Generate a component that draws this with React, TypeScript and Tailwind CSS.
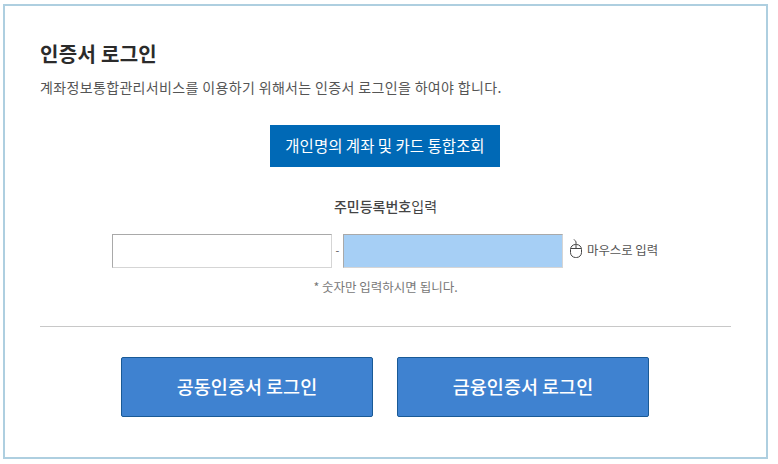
const font = { fontFamily: '"Noto Sans CJK KR", "Liberation Sans", sans-serif' };

function MouseIcon() {
  return (
    <svg width="14" height="19" viewBox="0 0 14 19" fill="none" stroke="#444" strokeWidth="1">
      <rect x="1.5" y="5.5" width="11" height="13" rx="5" />
      <path d="M2 9.5h10M7 5.5v4M7 5.5V3C7 1.8 5.5 1.6 5 .5" />
    </svg>
  );
}

export default function App() {
  return (
    <div className="w-[778px] h-[464px] bg-white pl-[3px] pt-[4px]" style={font}>
      <div className="w-[765px] h-[455px] border-2 border-[#aecfe0] pl-[35px] pr-[35px] pt-[33px]">
        <h1 className="text-[20px] leading-[30px] font-bold tracking-[0.3px] text-[#2b2b2b]">인증서 로그인</h1>
        <p className="mt-[8px] text-[14px] leading-[20px] tracking-[0.35px] text-[#555]">
          계좌정보통합관리서비스를 이용하기 위해서는 인증서 로그인을 하여야 합니다.
        </p>
        <div className="mt-[28px] pr-px flex justify-center">
          <button className="w-[230px] h-[42px] bg-[#0069b6] text-white text-[15.5px]">
            개인명의 계좌 및 카드 통합조회
          </button>
        </div>
        <p className="mt-[29px] text-center text-[14px] leading-[20px] font-medium text-[#444]">
          주민등록번호<span className="font-normal">입력</span>
        </p>
        <div className="mt-[18px] ml-[72px] flex items-center">
          <input className="w-[220px] h-[34px] bg-white border border-[#d5d5d5] border-t-[#a9a9a9] border-l-[#a9a9a9]" />
          <span className="w-[11px] -mt-[2px] text-center text-[11px] text-[#555]">-</span>
          <input className="w-[220px] h-[34px] bg-[#a6cff5] border border-[#d5d5d5] border-t-[#a9a9a9] border-l-[#a9a9a9]" />
          <span className="ml-[6px] mr-[4px] flex -mt-[5px]"><MouseIcon /></span>
          <span className="-mt-[2px] text-[12.4px] text-[#555]">마우스로 입력</span>
        </div>
        <p className="mt-[9px] text-center text-[12.5px] leading-[20px] text-[#777]">* 숫자만 입력하시면 됩니다.</p>
        <div className="mt-[29px] h-px bg-[#c8c8c8]" />
        <div className="mt-[30px] pr-px flex justify-center gap-[24px]">
          <button className="w-[252px] h-[60px] rounded-[2px] bg-[#3f82d0] border border-[#1a5a96] text-white text-[18.5px] font-medium">
            공동인증서 로그인
          </button>
          <button className="w-[252px] h-[60px] rounded-[2px] bg-[#3f82d0] border border-[#1a5a96] text-white text-[18.5px] font-medium">
            금융인증서 로그인
          </button>
        </div>
      </div>
    </div>
  );
}
